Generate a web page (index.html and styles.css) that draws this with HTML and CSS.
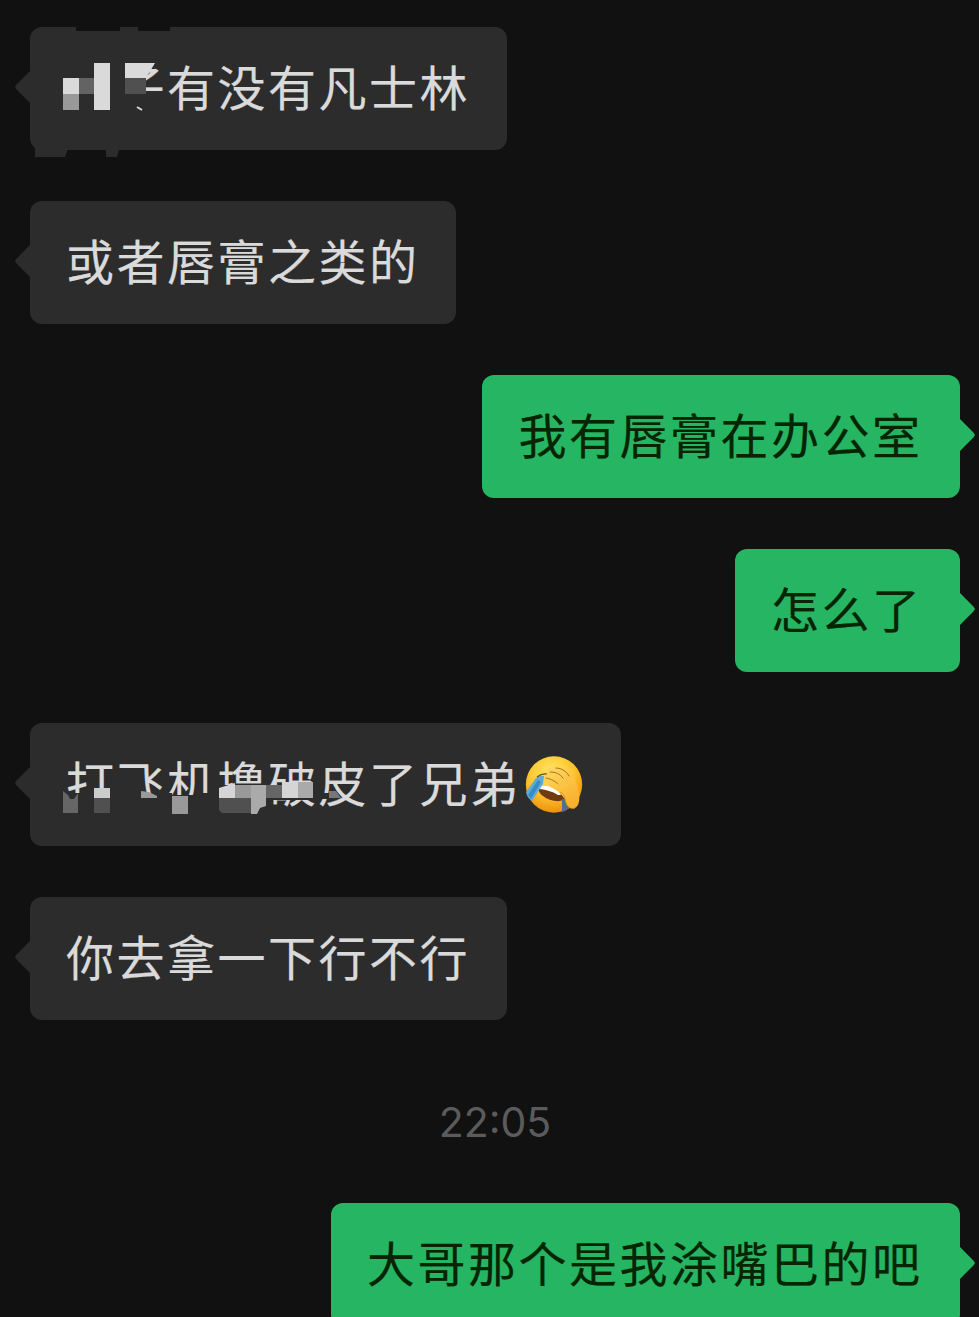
FILE: index.html
```html
<!DOCTYPE html>
<html lang="zh-CN">
<head>
  <meta charset="UTF-8">
  <meta name="viewport" content="width=device-width, initial-scale=1.0">
  <title>聊天记录</title>
  <link rel="stylesheet" href="styles.css">
</head>
<body>
  <div class="chat">
    <div class="bubble left">
      <span class="blank"></span><span class="text">子有没有凡士林</span>
      <svg class="mosaic" viewBox="0 0 477 130" width="477" height="130">
        <path fill="#111" d="M46 0H90V4H46zM108 0H140V4H108z"/>
        <path fill="#2c2c2c" d="M5 119H39L35 130H5zM76 119H90L87 130H76zM30 34H116V88H30zM90 67H116V88H90z"/>
        <path fill="#dadada" d="M33 51H49V67H33zM64 36H80V83H64zM95 36H125L116 51H95z"/>
        <path fill="#636363" d="M49 51H64V67H49z"/>
        <path fill="#999" d="M33 67H49V83H33z"/>
        <path fill="#505050" d="M95 51H116V67H95z"/>
        <path stroke="#dadada" stroke-width="2" d="M107 80l5 3"/>
      </svg>
    </div>
    <div class="bubble left"><span class="text">或者唇膏之类的</span></div>
    <div class="bubble right"><span class="text">我有唇膏在办公室</span></div>
    <div class="bubble right"><span class="text">怎么了</span></div>
    <div class="bubble left">
      <span class="text">打飞机撸破皮了兄弟</span><svg class="emoji" viewBox="0 0 60 60" width="60" height="60">
        <defs>
          <radialGradient id="face" cx=".45" cy=".3" r=".72">
            <stop offset="0" stop-color="#ffe968"/>
            <stop offset=".55" stop-color="#fdc52f"/>
            <stop offset="1" stop-color="#ee8c0c"/>
          </radialGradient>
          <linearGradient id="hand" x1="0" y1="0" x2=".6" y2="1">
            <stop offset="0" stop-color="#ffdc66"/>
            <stop offset="1" stop-color="#f9b02c"/>
          </linearGradient>
        </defs>
        <circle cx="30" cy="29.5" r="28.2" fill="url(#face)"/>
        <path d="M15 32C25 31 36 36 41 44 36 48 25 46 19 41 15 38 14 35 15 32z" fill="#713b12"/>
        <path d="M16 31C24 30 33 33 37 40L34 40C28 36 22 35 16 34z" fill="#fff"/>
        <path d="M38 44L38 57Q42 56 45 53L43 44z" fill="#52708a"/>
        <path d="M19 18C21 14 26 12 32 12C41 11 49 17 51 25L55 37C56 45 55 51 51 53C46 55 42 51 41 44C39 42 38 40 36 37C31 35 26 32 22 28C19 27 18 23 19 18z" fill="url(#hand)"/>
        <path d="M22 23C28 24 32 27 34 29M26 17C32 17 36 19 39 23M32 13C38 13 43 17 45 21" fill="none" stroke="#a87519" stroke-width="1" stroke-linecap="round"/>
        <path d="M36 37C39 38 41 41 41 44C42 51 46 55 51 53" fill="none" stroke="#c98719" stroke-width=".7"/>
        <path d="M12 23Q16 20 20 21L19 29L8 46Q3 43 2 37z" fill="#5eabd6"/>
        <path d="M14 25L4 40L7 44L17 27z" fill="#388cc2"/>
        <path d="M13 22Q18 18 23 19" fill="none" stroke="#6b501b" stroke-width="1.2"/>
      </svg>
      <svg class="mosaic" viewBox="0 0 591 130" width="591" height="130">
        <path fill="#2c2c2c" d="M30 70H142V92H30zM142 72H170V92H142zM170 70H188V92H170zM188 62H243V92H188zM243 75H283V77H243zM283 70H300V76H283z"/>
        <path fill="#666" d="M33 68L38 72L40 76H44L48 70V90H33zM236 62H252V75H236z"/>
        <path fill="#ccc" d="M64 65H80V75H64z"/>
        <path fill="#505050" d="M64 75H80V90H64zM189 75H221V90H192L189 87z"/>
        <path fill="#999" d="M111 68L119 69L127 73V75H111zM142 73H158V91H142zM205 62H221V75H205z"/>
        <path fill="#d5d5d5" d="M189 65L205 60V75H189zM252 59H268V75H252z"/>
        <path fill="#aaa" d="M221 62H236V83L230 85L227 91H221zM268 59H283V75H268z"/>
        <path fill="#777" d="M299 68H306L311 75H299z"/>
      </svg>
    </div>
    <div class="bubble left"><span class="text">你去拿一下行不行</span></div>
    <div class="time">22:05</div>
    <div class="bubble right"><span class="text">大哥那个是我涂嘴巴的吧</span></div>
  </div>
</body>
</html>
```

FILE: styles.css
```css
* {
  box-sizing: border-box;
}
body {
  margin: 0;
  background: #111;
  font-family: "Noto Sans CJK SC", sans-serif;
  overflow: hidden;
}
.chat {
  display: flex;
  flex-direction: column;
  gap: 51px;
  height: 1317px;
  padding: 27px 19px 0 30px;
}
.bubble {
  position: relative;
  display: flex;
  align-items: center;
  flex-shrink: 0;
  height: 123px;
  padding: 0 36.5px 0 36px;
  border-radius: 12px;
  font-size: 48px;
  letter-spacing: 2.5px;
  line-height: 70px;
  white-space: nowrap;
}
.text {
  padding-bottom: 7px;
  -webkit-text-stroke: 0.2px currentColor;
}
.left {
  align-self: flex-start;
  background: #2c2c2c;
  color: #dadada;
}
.right {
  align-self: flex-end;
  padding-right: 37.5px;
  background: #26b562;
  color: #062504;
}
/* bubble tail */
.bubble::after {
  content: "";
  position: absolute;
  top: 43px;
  width: 16px;
  height: 34px;
  background: inherit;
}
.left::after {
  left: -15px;
  clip-path: polygon(100% 0, 10% 43%, 0 50%, 10% 57%, 100% 100%);
}
.right::after {
  right: -15px;
  clip-path: polygon(0 0, 90% 43%, 100% 50%, 90% 57%, 0 100%);
}
.blank {
  width: 50.5px;
}
.mosaic {
  position: absolute;
  left: 0;
  top: 0;
  z-index: 1;
}
.emoji {
  margin: 0 1px 0 3px;
}
.time {
  flex-shrink: 0;
  height: 81px;
  padding-top: 24px;
  text-align: center;
  font-family: Inter, sans-serif;
  font-size: 41px;
  line-height: 54px;
  color: #5b5b5b;
}
```
